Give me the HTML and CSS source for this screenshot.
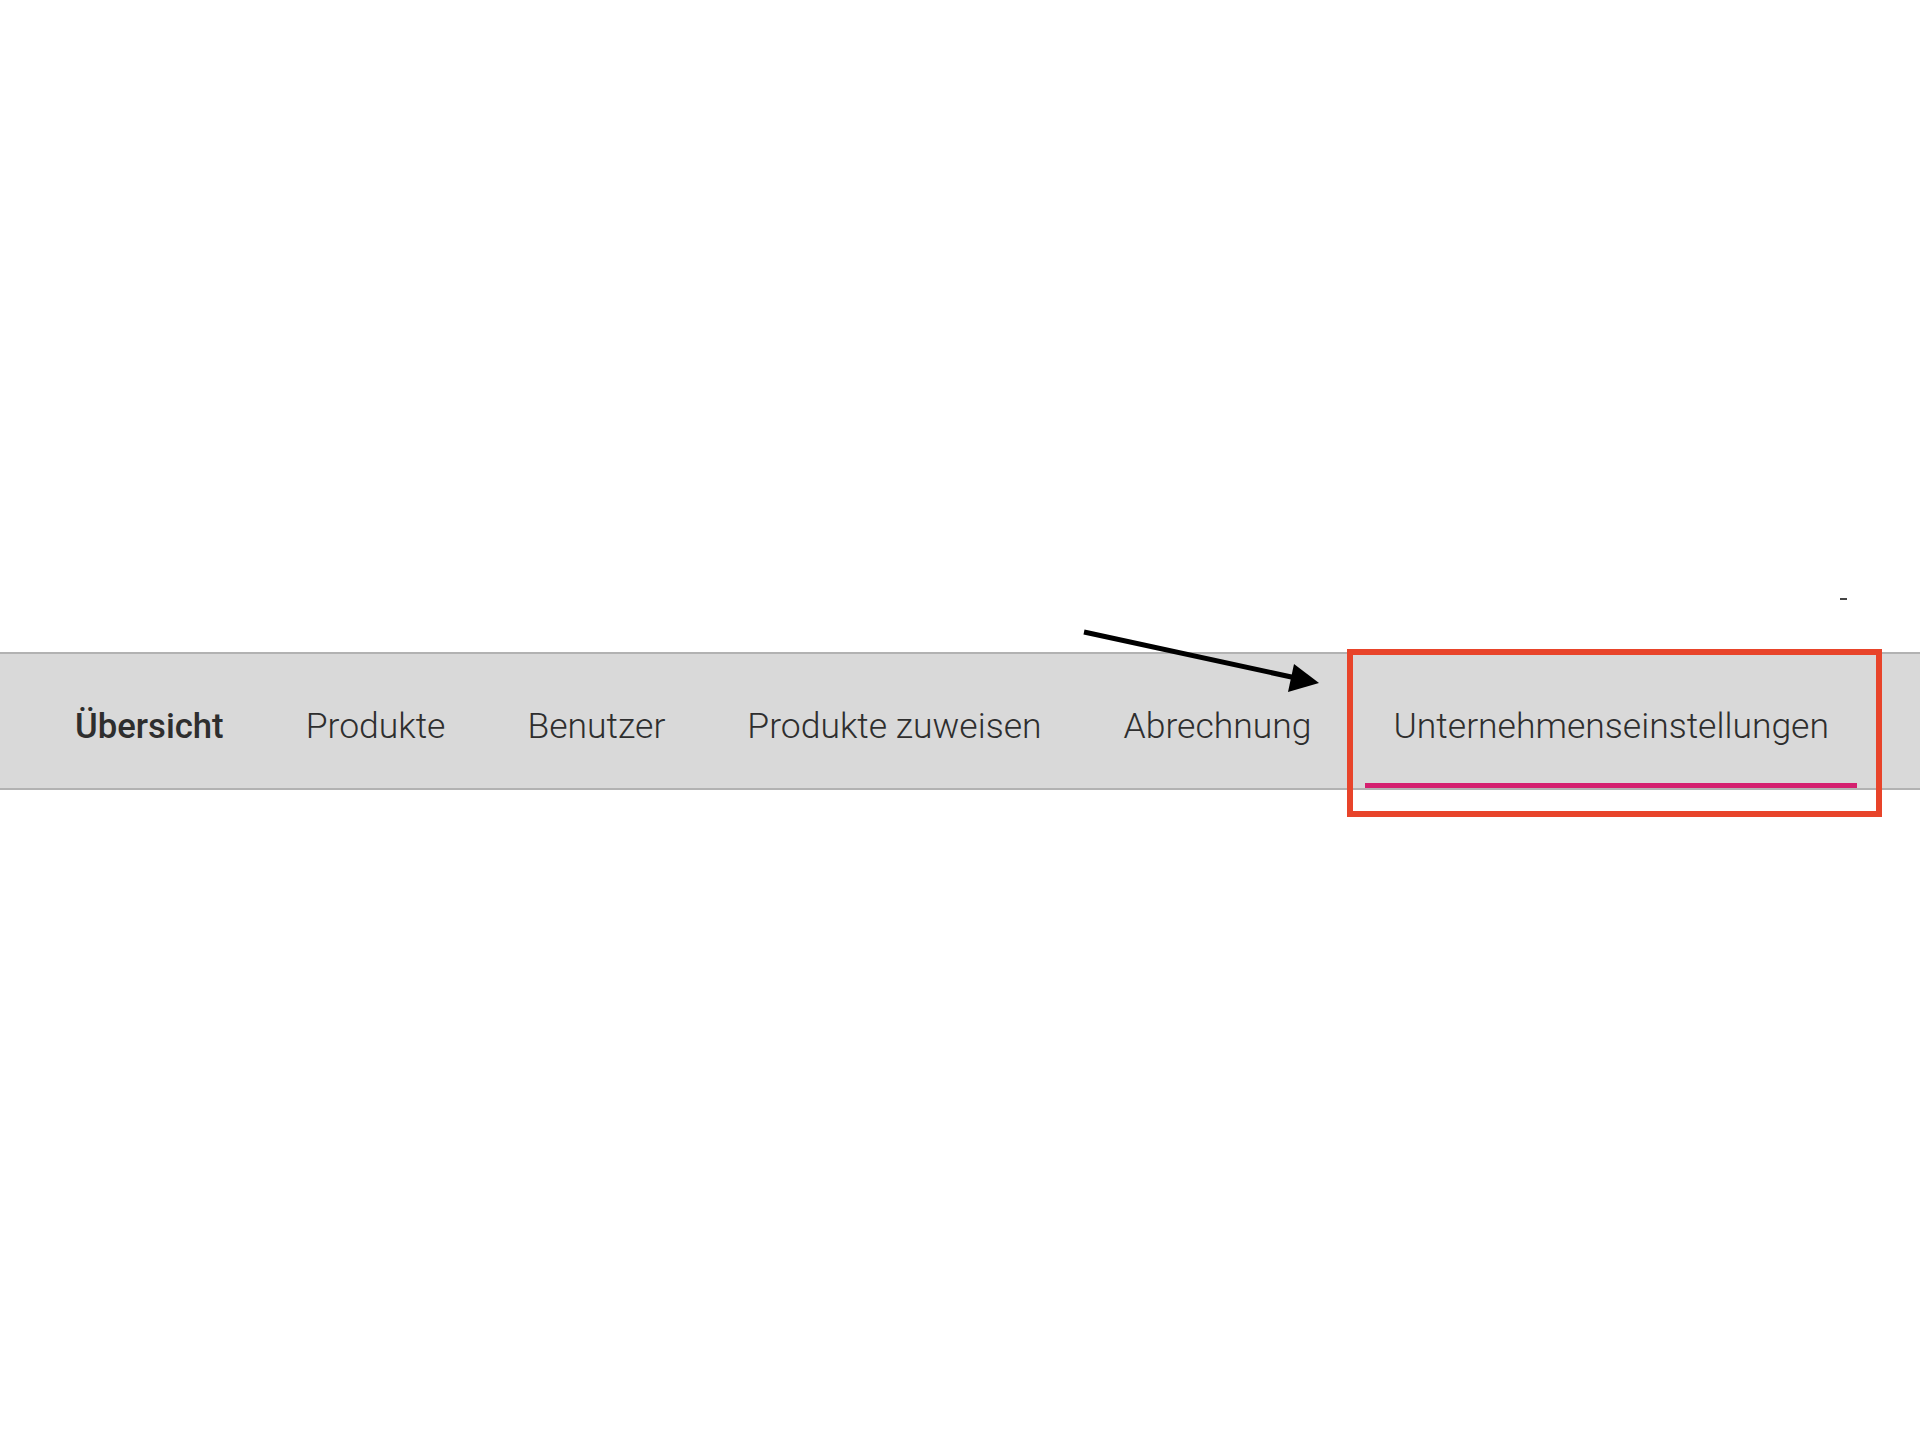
FILE: index.html
```html
<!DOCTYPE html>
<html lang="de">
<head>
<meta charset="utf-8">
<title>Navigation</title>
<link rel="stylesheet" href="styles.css">
</head>
<body>
<div class="page">
  <span class="dash"></span>
  <nav class="tabbar">
    <a class="tab tab-bold">Übersicht</a>
    <a class="tab">Produkte</a>
    <a class="tab">Benutzer</a>
    <a class="tab">Produkte zuweisen</a>
    <a class="tab">Abrechnung</a>
    <a class="tab tab-active">Unternehmenseinstellungen</a>
  </nav>
  <div class="highlight"></div>
  <svg class="arrow" width="1920" height="1440" viewBox="0 0 1920 1440">
    <line x1="1084" y1="632" x2="1296" y2="678" stroke="#000" stroke-width="5"/>
    <polygon points="1319,683 1294,664 1288,692" fill="#000"/>
  </svg>
</div>
</body>
</html>
```

FILE: styles.css
```css
html, body {
  margin: 0;
  padding: 0;
  background: #ffffff;
}

.page {
  position: relative;
  width: 1920px;
  height: 1440px;
  padding-top: 652px;
  box-sizing: border-box;
  font-family: Roboto, "Liberation Sans", sans-serif;
}

.tabbar {
  display: flex;
  gap: 26px;
  padding-left: 47px;
  background: #d9d9d9;
  border-top: 2px solid #b2b2b2;
  border-bottom: 2px solid #b2b2b2;
}

.tab {
  display: block;
  padding: 52px 28px 36px;
  border-bottom: 5px solid transparent;
  font-size: 35.5px;
  font-weight: 300;
  line-height: 41px;
  color: #2e2e2e;
  white-space: nowrap;
}

.tab-bold {
  font-size: 34.7px;
  font-weight: 500;
}

.tab-active {
  border-bottom-color: #d4206f;
}

.highlight {
  position: absolute;
  left: 1347px;
  top: 649px;
  width: 535px;
  height: 168px;
  box-sizing: border-box;
  border: 6px solid #e8442a;
  pointer-events: none;
}

.arrow {
  position: absolute;
  left: 0;
  top: 0;
  pointer-events: none;
}

.dash {
  position: absolute;
  left: 1840px;
  top: 598px;
  width: 7px;
  height: 2px;
  background: #444444;
}
```
